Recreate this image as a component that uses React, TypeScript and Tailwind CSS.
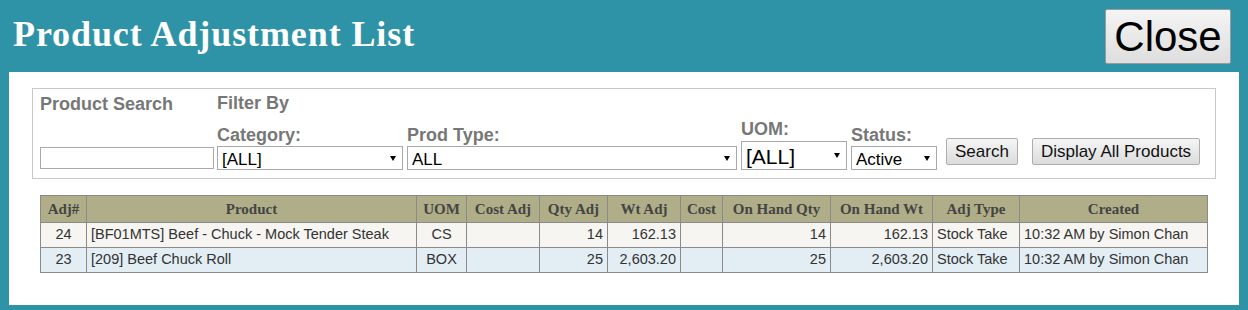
const columns = [
  { label: "Adj#", w: 46 },
  { label: "Product", w: 330 },
  { label: "UOM", w: 50 },
  { label: "Cost Adj", w: 73 },
  { label: "Qty Adj", w: 68 },
  { label: "Wt Adj", w: 73 },
  { label: "Cost", w: 42 },
  { label: "On Hand Qty", w: 108 },
  { label: "On Hand Wt", w: 102 },
  { label: "Adj Type", w: 87 },
  { label: "Created", w: 188 },
];

const rows = [
  {
    id: "24",
    product: "[BF01MTS] Beef - Chuck - Mock Tender Steak",
    uom: "CS",
    qty: "14",
    wt: "162.13",
    ohQty: "14",
    ohWt: "162.13",
    type: "Stock Take",
    created: "10:32 AM by Simon Chan",
    bg: "bg-[#f6f5f1]",
  },
  {
    id: "23",
    product: "[209] Beef Chuck Roll",
    uom: "BOX",
    qty: "25",
    wt: "2,603.20",
    ohQty: "25",
    ohWt: "2,603.20",
    type: "Stock Take",
    created: "10:32 AM by Simon Chan",
    bg: "bg-[#e2edf4]",
  },
];

function FakeSelect({ value, width, big }: { value: string; width: string; big?: boolean }) {
  return (
    <div
      className={`${width} ${big ? "h-[29px] text-[21px]" : "h-[24px] text-[17px]"} flex items-center justify-between border border-[#a9a9a9] bg-white pl-[4px] pr-[6px] text-black leading-none`}
    >
      <span className="mt-[2px]">{value}</span>
      <span className="h-0 w-0 border-x-[3px] border-t-[5px] border-x-transparent border-t-black" />
    </div>
  );
}

function Label({ children }: { children: React.ReactNode }) {
  return <div className="text-[18px] font-bold leading-[20px] text-[#777]">{children}</div>;
}

function Btn({ children }: { children: React.ReactNode }) {
  return (
    <button className="mb-[5px] h-[27px] rounded-[2px] border border-[#adadad] bg-gradient-to-b from-[#f5f5f5] to-[#dcdcdc] px-[8px] text-[17px] leading-none text-[#111]">
      {children}
    </button>
  );
}

export default function App() {
  return (
    <div className="h-[310px] w-[1248px] bg-[#2f93a8] font-['Liberation_Sans',Arial,sans-serif]">
      {/* Header */}
      <div className="flex h-[72px] items-start justify-between">
        <h1 className="pl-[13px] pt-[14px] font-['Liberation_Serif','Times_New_Roman',serif] text-[36px] font-bold leading-[40px] tracking-[0.9px] text-white">
          Product Adjustment List
        </h1>
        <button className="mr-[17px] mt-[9px] h-[55px] w-[126px] rounded-[2px] border border-[#9a9a9a] bg-gradient-to-b from-[#f4f4f4] to-[#dedede] text-[42px] leading-none text-black">
          Close
        </button>
      </div>

      {/* Panel */}
      <div className="mx-[9px] h-[233px] bg-white px-[23px] pt-[16px]">
        {/* Filters */}
        <div className="flex h-[91px] items-end border border-[#c8c8c8] pb-[8px] pl-[7px]">
          <div className="flex w-[177px] flex-col">
            <div className="mb-[33px]">
              <Label>Product Search</Label>
            </div>
            <div className="mb-[1px] h-[22px] w-[174px] border border-[#a9a9a9] bg-white" />
          </div>
          <div className="flex flex-col">
            <div className="mb-[6px]">
              <Label>Filter By</Label>
            </div>
            <div className="flex items-end gap-[4px]">
              <div className="flex flex-col gap-[1px]">
                <Label>Category:</Label>
                <FakeSelect value="[ALL]" width="w-[186px]" />
              </div>
              <div className="flex flex-col gap-[1px]">
                <Label>Prod Type:</Label>
                <FakeSelect value="ALL" width="w-[330px]" />
              </div>
              <div className="flex flex-col gap-[2px]">
                <Label>UOM:</Label>
                <FakeSelect value="[ALL]" width="w-[106px]" big />
              </div>
              <div className="flex flex-col gap-[1px]">
                <Label>Status:</Label>
                <FakeSelect value="Active" width="w-[86px]" />
              </div>
              <div className="ml-[5px]">
                <Btn>Search</Btn>
              </div>
              <div className="ml-[10px]">
                <Btn>Display All Products</Btn>
              </div>
            </div>
          </div>
        </div>

        {/* Table */}
        <table className="mt-[16px] ml-[8px] table-fixed border-collapse border border-[#8a8a8a] text-[14.5px]">
          <colgroup>
            {columns.map((c) => (
              <col key={c.label} style={{ width: c.w }} />
            ))}
          </colgroup>
          <thead>
            <tr className="h-[27px] bg-[#b0ae88]">
              {columns.map((c) => (
                <th
                  key={c.label}
                  className="border border-[#8a8a8a] px-[3px] text-center font-['Liberation_Serif','Times_New_Roman',serif] text-[15px] font-bold text-[#444]"
                >
                  {c.label}
                </th>
              ))}
            </tr>
          </thead>
          <tbody className="text-[#333]">
            {rows.map((r) => (
              <tr key={r.id} className={`h-[25px] ${r.bg}`}>
                <td className="border border-[#8a8a8a] px-[4px] text-center">{r.id}</td>
                <td className="border border-[#8a8a8a] px-[4px]">{r.product}</td>
                <td className="border border-[#8a8a8a] px-[4px] text-center">{r.uom}</td>
                <td className="border border-[#8a8a8a] px-[4px]"></td>
                <td className="border border-[#8a8a8a] px-[4px] text-right">{r.qty}</td>
                <td className="border border-[#8a8a8a] px-[4px] text-right">{r.wt}</td>
                <td className="border border-[#8a8a8a] px-[4px]"></td>
                <td className="border border-[#8a8a8a] px-[4px] text-right">{r.ohQty}</td>
                <td className="border border-[#8a8a8a] px-[4px] text-right">{r.ohWt}</td>
                <td className="border border-[#8a8a8a] px-[4px]">{r.type}</td>
                <td className="border border-[#8a8a8a] px-[4px]">{r.created}</td>
              </tr>
            ))}
          </tbody>
        </table>
      </div>
    </div>
  );
}
